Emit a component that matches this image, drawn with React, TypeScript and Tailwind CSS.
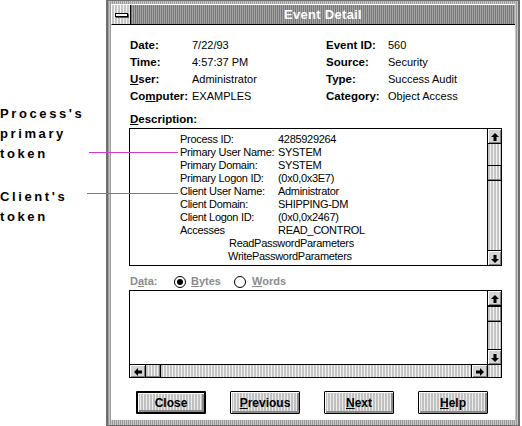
import React from 'react'

const stripes = 'bg-[repeating-linear-gradient(90deg,#c4c4c4_0_2px,#f4f4f4_2px_3px)]'

type Field = {
  label: React.ReactNode
  value: string
}

const leftFields: Field[] = [
  { label: 'Date:', value: '7/22/93' },
  { label: 'Time:', value: '4:57:37 PM' },
  { label: <><u>U</u>ser:</>, value: 'Administrator' },
  { label: <>Co<u>m</u>puter:</>, value: 'EXAMPLES' }
]

const rightFields: Field[] = [
  { label: 'Event ID:', value: '560' },
  { label: 'Source:', value: 'Security' },
  { label: 'Type:', value: 'Success Audit' },
  { label: 'Category:', value: 'Object Access' }
]

const descLines: [string, string][] = [
  ['Process ID:', '4285929264'],
  ['Primary User Name:', 'SYSTEM'],
  ['Primary Domain:', 'SYSTEM'],
  ['Primary Logon ID:', '(0x0,0x3E7)'],
  ['Client User Name:', 'Administrator'],
  ['Client Domain:', 'SHIPPING-DM'],
  ['Client Logon ID:', '(0x0,0x2467)'],
  ['Accesses', 'READ_CONTROL']
]

function Arrow({ dir }: { dir: 'up' | 'down' | 'left' | 'right' }) {
  const rotate = { up: 0, right: 90, down: 180, left: 270 }[dir]
  return (
    <svg width="8" height="8" viewBox="0 0 8 8" style={{ transform: `rotate(${rotate}deg)` }}>
      <path d="M4 0 L8 4 L5.5 4 L5.5 8 L2.5 8 L2.5 4 L0 4 Z" fill="#000" />
    </svg>
  )
}

function ScrollButton({ dir, className = '' }: { dir: 'up' | 'down' | 'left' | 'right'; className?: string }) {
  return (
    <div className={`flex items-center justify-center bg-[#d4d4d4] border-t border-l border-white shadow-[inset_-1px_-1px_0_#808080] ${className}`}>
      <Arrow dir={dir} />
    </div>
  )
}

function VScroll({ thumbOffset }: { thumbOffset: string }) {
  return (
    <div className="w-[14px] border-l border-black flex flex-col">
      <ScrollButton dir="up" className="h-[14px] border-b-black" />
      <div className={`${thumbOffset} border-t border-black ${stripes}`} />
      <div className={`h-[16px] border-y border-black ${stripes} shadow-[inset_-1px_-1px_0_#808080]`} />
      <div className={`flex-1 ${stripes}`} />
      <div className="border-t border-black">
        <ScrollButton dir="down" className="h-[14px]" />
      </div>
    </div>
  )
}

function Button({ children, isDefault = false }: { children: React.ReactNode; isDefault?: boolean }) {
  return (
    <div
      className={`w-[70px] h-[23px] flex items-center justify-center text-[12px] font-bold text-black ${
        isDefault ? 'border-2' : 'border'
      } border-black rounded-[1px] bg-[repeating-linear-gradient(90deg,#c0c0c0_0_2px,#ececec_2px_3px)] shadow-[inset_1px_1px_0_#fff,inset_-2px_-2px_0_#8a8a8a]`}
    >
      {children}
    </div>
  )
}

function Radio({ checked }: { checked?: boolean }) {
  return (
    <span className="w-[12px] h-[12px] rounded-full border border-black bg-white flex items-center justify-center">
      {checked && <span className="w-[6px] h-[6px] rounded-full bg-black" />}
    </span>
  )
}

export default function App() {
  return (
    <div className="relative w-[522px] h-[426px] bg-white flex overflow-hidden font-['Liberation_Sans',Arial,sans-serif] text-black">
      {/* annotations */}
      <div className="w-[106px] shrink-0 pt-[104px] text-[13px] font-bold leading-[20px] tracking-[2.6px]">
        <div>Process's</div>
        <div>primary</div>
        <div>token</div>
        <div className="mt-[23px]">Client's</div>
        <div>token</div>
      </div>

      {/* window */}
      <div className="w-[414px] h-[426px] flex flex-col border-l-2 border-r-2 border-t border-b border-[#6e6e6e] px-[3px] pt-[3px] pb-[5px] bg-[repeating-linear-gradient(90deg,#9a9a9a_0_1px,#c8c8c8_1px_2px)]">
        <div className="h-[21px] flex border-t border-l border-white border-b border-b-black">
          <div className={`w-[19px] border-r border-black flex items-center justify-center ${stripes}`}>
            <div className="w-[13px] h-[4px] bg-white border border-black shadow-[1px_1px_0_#555]" />
          </div>
          <div className="flex-1 flex items-center justify-center bg-[repeating-linear-gradient(90deg,#767676_0_1px,#a6a6a6_1px_2px)] text-white text-[13px] font-bold tracking-[0.3px]">
            Event Detail
          </div>
        </div>

        <div className="flex-1 bg-white flex flex-col pl-[18px] pr-[13px] text-[11px]">
          <div className="pt-[12px] pl-px grid grid-cols-[62px_134px_62px_1fr] leading-[17px] whitespace-nowrap">
            {leftFields.map((field, i) => (
              <React.Fragment key={i}>
                <div className="font-bold text-[11.5px]">{field.label}</div>
                <div>{field.value}</div>
                <div className="font-bold text-[11.5px]">{rightFields[i].label}</div>
                <div>{rightFields[i].value}</div>
              </React.Fragment>
            ))}
          </div>

          <div className="mt-[6px] h-[17px] leading-[17px] pl-px font-bold text-[11.5px]">
            <u>D</u>escription:
          </div>

          <div className="h-[138px] border border-black flex">
            <div className="flex-1 pt-[4px] pl-[50px] leading-[13px] whitespace-nowrap tracking-[-0.3px]">
              {descLines.map(([label, value]) => (
                <div key={label} className="flex">
                  <span className="w-[98px] shrink-0">{label}</span>
                  <span>{value}</span>
                </div>
              ))}
              <div className="pl-[49px]">ReadPasswordParameters</div>
              <div className="pl-[48px]">WritePasswordParameters</div>
            </div>
            <VScroll thumbOffset="h-[22px]" />
          </div>

          <div className="mt-[7px] h-[17px] flex items-center pl-px text-[#8c8c8c] font-bold text-[11px]">
            <span className="w-[44px]">D<u>a</u>ta:</span>
            <Radio checked />
            <span className="ml-[5px] w-[43px]"><u>B</u>ytes</span>
            <Radio />
            <span className="ml-[6px]"><u>W</u>ords</span>
          </div>

          <div className="h-[88px] border border-black flex flex-col">
            <div className="flex-1 flex">
              <div className="flex-1" />
              <VScroll thumbOffset="h-0" />
            </div>
            <div className="h-[13px] border-t border-black flex">
              <ScrollButton dir="left" className="w-[15px]" />
              <div className={`w-[16px] border-x border-black ${stripes} shadow-[inset_-1px_-1px_0_#808080]`} />
              <div className={`flex-1 ${stripes}`} />
              <div className="border-l border-black">
                <ScrollButton dir="right" className="w-[15px] h-full" />
              </div>
              <div className={`w-[14px] border-l border-black ${stripes}`} />
            </div>
          </div>

          <div className="mt-[13px] pl-[7px] flex gap-[24px]">
            <Button isDefault>Close</Button>
            <Button><u>P</u>revious</Button>
            <Button><u>N</u>ext</Button>
            <Button><u>H</u>elp</Button>
          </div>
        </div>
      </div>

      {/* callout lines */}
      <div className="absolute left-[89px] top-[152px] w-[89px] h-px bg-[#d43ad4]" />
      <div className="absolute left-[87px] top-[193px] w-[91px] h-px bg-[#d43ad4]" />
    </div>
  )
}
